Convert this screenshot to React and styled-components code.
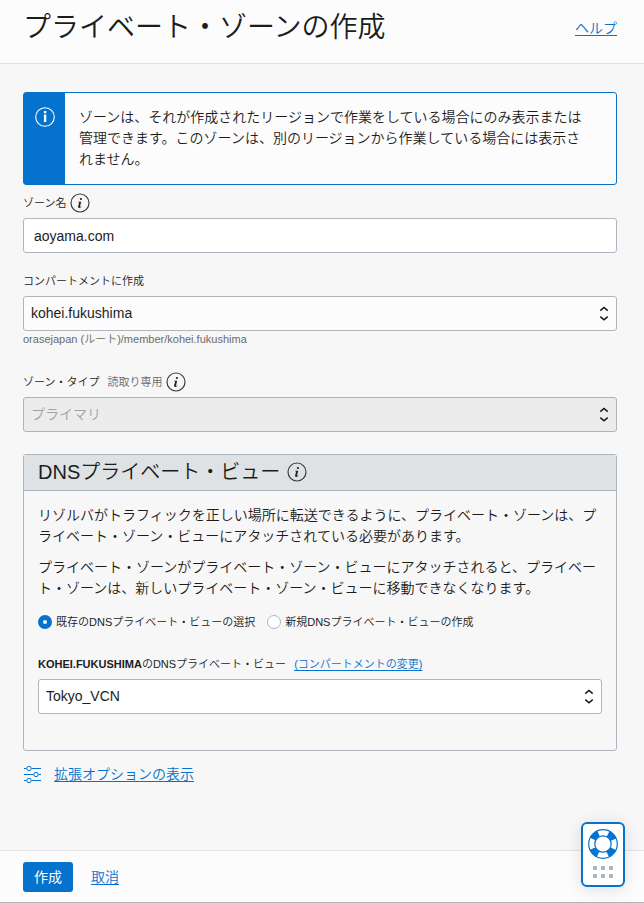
import React from "react";
import styled, { createGlobalStyle } from "styled-components";

const blue = "#0572ce";
const line = "#aeb5bf";
const ink = "#1c1c1c";

const GlobalStyle = createGlobalStyle`
  *, *::before, *::after { box-sizing: border-box; }
  body {
    margin: 0;
    background: #f7f7f7;
    color: ${ink};
    font: 350 14px/21px "Liberation Sans", "Noto Sans CJK JP", sans-serif;
  }
  button, input, select { font: inherit; color: inherit; }
`;

const Page = styled.div`
  display: flex;
  flex-direction: column;
  min-height: 100vh;
`;

const Header = styled.header`
  display: flex;
  align-items: center;
  justify-content: space-between;
  padding: 7px 27px 14px 23px;
  background: #fcfcfc;
  border-bottom: 1px solid #e2e2e2;
`;

const Title = styled.h1`
  margin: 0;
  font-size: 28px;
  line-height: 42px;
  font-weight: 350;
`;

const Link = styled.a`
  color: ${blue};
  text-decoration: underline;
  text-underline-offset: 2px;
  font-size: ${(p) => (p.$small ? "11px" : "14px")};
`;

const Form = styled.form`
  display: flex;
  flex-direction: column;
  flex: 1;
`;

const Main = styled.main`
  flex: 1;
  padding: 28px 27px 24px 23px;
`;

const Notice = styled.section`
  display: flex;
  background: #fcfcfc;
  border: 1px solid ${blue};
  border-radius: 3px;
`;

const NoticeMark = styled.div`
  flex: none;
  width: 41px;
  padding: 14px 11px;
  background: ${blue};
`;

const NoticeText = styled.p`
  margin: 0;
  padding: 14px 24px 14px 14px;
`;

const LabelRow = styled.div`
  display: flex;
  align-items: center;
  gap: ${(p) => p.$gap || 4}px;
  height: 20px;
  margin: ${(p) => p.$top}px 0 5px;
  font-size: 11px;
  line-height: 20px;
  white-space: nowrap;
  b { font-weight: 700; }
`;

const Muted = styled.span`
  margin-left: 4px;
  color: #6b6b6b;
`;

const InfoButton = styled.button`
  display: flex;
  padding: 0;
  border: 0;
  background: none;
  cursor: help;
`;

const TextInput = styled.input`
  display: block;
  width: 100%;
  height: 35px;
  padding: 0 10px;
  background: #fff;
  border: 1px solid ${line};
  border-radius: 3px;
`;

const SelectBox = styled.div`
  display: grid;
  align-items: center;
  > * { grid-area: 1 / 1; }
  > svg {
    justify-self: end;
    margin-right: 8px;
    pointer-events: none;
  }
`;

const Select = styled.select`
  appearance: none;
  width: 100%;
  height: 35px;
  padding: 0 24px 0 7px;
  background: ${(p) => p.$bg || "#fcfcfc"};
  border: 1px solid ${line};
  border-radius: 3px;
  &:disabled {
    background: #ececec;
    color: #a2a2a2;
    opacity: 1;
  }
`;

const Hint = styled.p`
  margin: 0;
  font-size: 11px;
  line-height: 17px;
  color: #6b6b6b;
`;

const Panel = styled.section`
  margin-top: 22px;
  border: 1px solid ${line};
  border-radius: 3px;
`;

const PanelHead = styled.div`
  display: flex;
  align-items: center;
  gap: 7px;
  height: 36px;
  padding: 0 14px 2px;
  background: #dfe2e5;
  border-bottom: 1px solid ${line};
`;

const PanelTitle = styled.h2`
  margin: 0;
  font-size: 20px;
  line-height: 32px;
  font-weight: 350;
`;

const PanelBody = styled.div`
  padding: 14px 14px 36px;
`;

const Paragraph = styled.p`
  margin: 0 0 10px;
`;

const Choices = styled.div`
  display: flex;
  align-items: center;
  gap: 12px;
  height: 20px;
  margin-top: 13px;
`;

const Choice = styled.label`
  display: flex;
  align-items: center;
  gap: 4px;
  font-size: 11px;
  line-height: 20px;
  white-space: nowrap;
`;

const Radio = styled.input`
  appearance: none;
  flex: none;
  width: 14px;
  height: 14px;
  margin: 0;
  background: #fff;
  border: 1px solid ${line};
  border-radius: 50%;
  &:checked { border: 5px solid ${blue}; }
`;

const Advanced = styled.div`
  display: flex;
  align-items: center;
  gap: 12px;
  margin-top: 13px;
`;

const Footer = styled.footer`
  display: flex;
  align-items: center;
  gap: 18px;
  padding: 11px 23px 10px;
  background: #fcfcfc;
  border-top: 1px solid #e2e2e2;
  border-bottom: 1px solid ${line};
`;

const Submit = styled.button`
  height: 30px;
  padding: 0 11px;
  border: 0;
  border-radius: 3px;
  background: ${blue};
  color: #fff;
  font-weight: 400;
`;

const HelpWidget = styled.button`
  position: fixed;
  right: 19px;
  bottom: 16px;
  display: flex;
  flex-direction: column;
  align-items: center;
  gap: 7px;
  width: 44px;
  height: 65px;
  padding: 5px 0;
  background: #fff;
  border: 2px solid ${blue};
  border-radius: 6px;
  box-shadow: 0 2px 16px rgba(0, 0, 0, 0.12);
`;

const Dots = styled.span`
  display: grid;
  grid-template-columns: repeat(3, 4px);
  grid-auto-rows: 4px;
  gap: 4px;
  > i { background: ${line}; }
`;

function InfoIcon() {
  return (
    <svg width="20" height="20" viewBox="0 0 20 20" aria-hidden="true">
      <circle cx="10" cy="10" r="9" fill="none" stroke="#3c3c3c" strokeWidth="1.2" />
      <circle cx="10.9" cy="6" r="1.1" fill="#222" />
      <path d="M8 8.7h3.2l-1.2 4.7q-.1.7.5.4l.9-.6-.1.7q-1.2 1-2.3 1-1.2-.1-.9-1.4l1-3.8q.1-.5-.5-.5H8z" fill="#222" />
    </svg>
  );
}

function NoticeIcon() {
  return (
    <svg width="20" height="20" viewBox="0 0 20 20" aria-hidden="true" display="block">
      <circle cx="10" cy="10" r="9.3" fill="none" stroke="#fff" strokeWidth="1.1" />
      <path d="M8.9 4h2.4v2.3H8.9zM8.9 7.6h2.4V15H8.9z" fill="#fff" />
    </svg>
  );
}

function Chevrons() {
  return (
    <svg width="10" height="16" viewBox="0 0 10 16" aria-hidden="true" fill="none" stroke="#161616" strokeWidth="1.5">
      <path d="M1.3 4.6 5 1.4 8.7 4.6M1.3 10.6 5 13.8l3.7-3.2" />
    </svg>
  );
}

function SlidersIcon() {
  return (
    <svg width="19" height="18" viewBox="0 0 19 18" aria-hidden="true" fill="none" stroke={blue} strokeWidth="1">
      <path d="M1 2.5h2.5M8.5 2.5H18M1 8.5h9.5M15.5 8.5H18M1 14.5h2.5M8.5 14.5H18" />
      <circle cx="6" cy="2.5" r="2.2" />
      <circle cx="13" cy="8.5" r="2.2" />
      <circle cx="6" cy="14.5" r="2.2" />
    </svg>
  );
}

function LifeRing() {
  return (
    <svg width="30" height="30" viewBox="0 0 30 30" aria-hidden="true" fill="none" stroke={blue} display="block">
      <circle cx="15" cy="15" r="11.4" strokeWidth="6" strokeDasharray="8 9.907" strokeDashoffset="-4.953" />
      <circle cx="15" cy="15" r="14.3" strokeWidth="1.2" />
      <circle cx="15" cy="15" r="8.2" strokeWidth="1.2" />
    </svg>
  );
}

function Info({ label }) {
  return (
    <InfoButton type="button" aria-label={label}>
      <InfoIcon />
    </InfoButton>
  );
}

function SelectField({ id, value, disabled, bg }) {
  return (
    <SelectBox>
      <Select id={id} defaultValue={value} disabled={disabled} $bg={bg}>
        <option>{value}</option>
      </Select>
      <Chevrons />
    </SelectBox>
  );
}

export default function App() {
  return (
    <Page lang="ja">
      <GlobalStyle />
      <Header>
        <Title>プライベート・ゾーンの作成</Title>
        <Link href="#help">ヘルプ</Link>
      </Header>
      <Form onSubmit={(e) => e.preventDefault()}>
        <Main>
          <Notice>
            <NoticeMark>
              <NoticeIcon />
            </NoticeMark>
            <NoticeText>
              ゾーンは、それが作成されたリージョンで作業をしている場合にのみ表示または管理できます。このゾーンは、別のリージョンから作業している場合には表示されません。
            </NoticeText>
          </Notice>

          <LabelRow $top={8}>
            <label htmlFor="zone-name">ゾーン名</label>
            <Info label="ゾーン名の情報" />
          </LabelRow>
          <TextInput id="zone-name" type="text" defaultValue="aoyama.com" />

          <LabelRow $top={18}>
            <label htmlFor="compartment">コンパートメントに作成</label>
          </LabelRow>
          <SelectField id="compartment" value="kohei.fukushima" />
          <Hint>orasejapan (ルート)/member/kohei.fukushima</Hint>

          <LabelRow $top={24}>
            <label htmlFor="zone-type">ゾーン・タイプ</label>
            <Muted>読取り専用</Muted>
            <Info label="ゾーン・タイプの情報" />
          </LabelRow>
          <SelectField id="zone-type" value="プライマリ" disabled />

          <Panel>
            <PanelHead>
              <PanelTitle>DNSプライベート・ビュー</PanelTitle>
              <Info label="DNSプライベート・ビューの情報" />
            </PanelHead>
            <PanelBody>
              <Paragraph>
                リゾルバがトラフィックを正しい場所に転送できるように、プライベート・ゾーンは、プライベート・ゾーン・ビューにアタッチされている必要があります。
              </Paragraph>
              <Paragraph>
                プライベート・ゾーンがプライベート・ゾーン・ビューにアタッチされると、プライベート・ゾーンは、新しいプライベート・ゾーン・ビューに移動できなくなります。
              </Paragraph>
              <Choices role="radiogroup" aria-label="DNSプライベート・ビュー">
                <Choice>
                  <Radio type="radio" name="view" defaultChecked />
                  既存のDNSプライベート・ビューの選択
                </Choice>
                <Choice>
                  <Radio type="radio" name="view" />
                  新規DNSプライベート・ビューの作成
                </Choice>
              </Choices>
              <LabelRow $top={22} $gap={8}>
                <label htmlFor="dns-view">
                  <b>KOHEI.FUKUSHIMA</b>のDNSプライベート・ビュー
                </label>
                <Link href="#compartment" $small>
                  (コンパートメントの変更)
                </Link>
              </LabelRow>
              <SelectField id="dns-view" value="Tokyo_VCN" bg="#fff" />
            </PanelBody>
          </Panel>

          <Advanced>
            <SlidersIcon />
            <Link href="#advanced">拡張オプションの表示</Link>
          </Advanced>
        </Main>
        <Footer>
          <Submit type="submit">作成</Submit>
          <Link href="#cancel">取消</Link>
        </Footer>
      </Form>
      <HelpWidget type="button" aria-label="サポート">
        <LifeRing />
        <Dots aria-hidden="true">
          <i /><i /><i /><i /><i /><i />
        </Dots>
      </HelpWidget>
    </Page>
  );
}
